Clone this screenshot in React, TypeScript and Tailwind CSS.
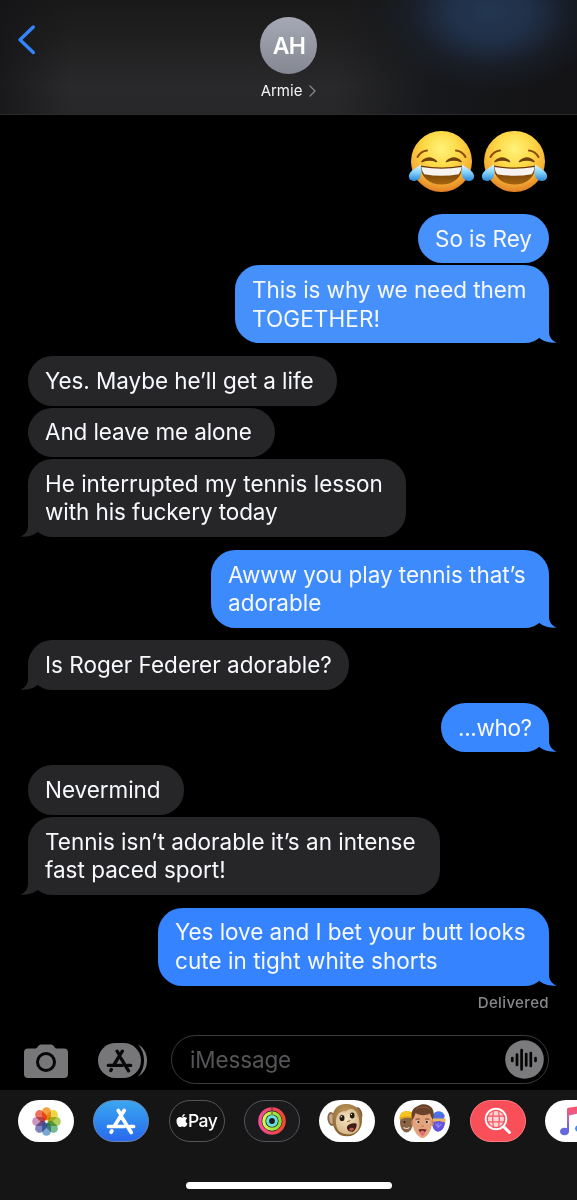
import type { ReactNode } from "react";
import { FaApple } from "react-icons/fa";

type Line = { text: string; className?: string };
type Message = {
  from: "me" | "them";
  lines: Line[];
  tail?: boolean;
  width: string;
  gap: string;
  tone?: string;
};

const messages: Message[] = [
  { from: "me", lines: [{ text: "So is Rey", className: "tracking-[-0.060px]" }], width: "w-[131px]", gap: "", tone: "bg-[#4791fc] text-[#4791fc]" },
  { from: "me", tail: true, lines: [{ text: "This is why we need them", className: "tracking-[-0.070px]" }, { text: "TOGETHER!", className: "tracking-[0.120px]" }], width: "w-[314px]", gap: "mt-[2px]", tone: "bg-[#4690fc] text-[#4690fc]" },
  { from: "them", lines: [{ text: "Yes. Maybe he’ll get a life", className: "tracking-[-0.060px]" }], width: "w-[309px]", gap: "mt-[12.7px]" },
  { from: "them", lines: [{ text: "And leave me alone", className: "tracking-[-0.120px]" }], width: "w-[247px]", gap: "mt-[2px]" },
  { from: "them", tail: true, lines: [{ text: "He interrupted my tennis lesson" }, { text: "with his fuckery today", className: "tracking-[-0.080px]" }], width: "w-[378px]", gap: "mt-[2px]" },
  { from: "me", tail: true, lines: [{ text: "Awww you play tennis that’s", className: "tracking-[-0.040px]" }, { text: "adorable" }], width: "w-[338px]", gap: "mt-[12.6px]", tone: "bg-[#3d8afd] text-[#3d8afd]" },
  { from: "them", tail: true, lines: [{ text: "Is Roger Federer adorable?" }], width: "w-[321px]", gap: "mt-[12.7px]" },
  { from: "me", tail: true, lines: [{ text: "...who?", className: "tracking-[-0.350px]" }], width: "w-[108px]", gap: "mt-[12.8px]", tone: "bg-[#3987fe] text-[#3987fe]" },
  { from: "them", lines: [{ text: "Nevermind", className: "tracking-[-0.060px]" }], width: "w-[156px]", gap: "mt-[12.9px]" },
  { from: "them", tail: true, lines: [{ text: "Tennis isn’t adorable it’s an intense" }, { text: "fast paced sport!" }], width: "w-[412px]", gap: "mt-[2px]" },
  { from: "me", tail: true, lines: [{ text: "Yes love and I bet your butt looks", className: "tracking-[-0.045px]" }, { text: "cute in tight white shorts", className: "tracking-[0.040px]" }], width: "w-[391px]", gap: "mt-[12.6px]", tone: "bg-[#3583fe] text-[#3583fe]" },
];

function Bubble({ message }: { message: Message }) {
  const mine = message.from === "me";
  const tone = message.tone ?? "bg-[#262629] text-[#262629]";
  return (
    <div
      className={`relative shrink-0 rounded-[24.5px] pt-[10.9px] pb-[10.3px] pl-[17px] ${message.width} ${message.gap} ${tone} ${mine ? "self-end" : "self-start"}`}
    >
      {message.tail && (
        <svg
          className={`absolute bottom-0 h-[24px] w-[24px] ${mine ? "-right-[8px]" : "-left-[8px] -scale-x-100"}`}
          viewBox="0 0 24 24"
          fill="currentColor"
        >
          <path d="M16 0V13C16 17.500 18.500 21.700 23.700 23.700C17 24 11.500 22.800 7 19.400L2 12Z" />
        </svg>
      )}
      {message.lines.map((line) => (
        <div key={line.text} className={`relative whitespace-nowrap text-[22.5px] leading-[28.4px] text-[#f7f9fc] ${line.className ?? ""}`}>
          <span>{line.text}</span>
        </div>
      ))}
    </div>
  );
}

function JoyFace() {
  return (
    <svg className="h-[64px] w-[68px]" viewBox="0 0 68 64" role="img" aria-label="Face with tears of joy">
      <defs>
        <radialGradient id="joyFace" cx="50%" cy="30%" r="70%">
          <stop offset="0" stopColor="#fff27a" />
          <stop offset=".4" stopColor="#fddb49" />
          <stop offset=".75" stopColor="#f8b335" />
          <stop offset="1" stopColor="#e07f26" />
        </radialGradient>
        <linearGradient id="joyTear" x1="0" y1="0" x2="0" y2="1">
          <stop offset="0" stopColor="#e3f8ff" />
          <stop offset=".5" stopColor="#7fd0fa" />
          <stop offset="1" stopColor="#2c83d6" />
        </linearGradient>
        <linearGradient id="joyMouth" x1="0" y1="0" x2="0" y2="1">
          <stop offset="0" stopColor="#633308" />
          <stop offset="1" stopColor="#a3650f" />
        </linearGradient>
      </defs>
      <circle cx="33.500" cy="31.500" r="30.500" fill="url(#joyFace)" />
      <path d="M9.500 27Q13 21 19 20.500M57.500 27Q54 21 48 20.500" fill="none" stroke="#8a4d0b" strokeWidth="2" strokeLinecap="round" />
      <path d="M14 31.500Q21 24.500 28.500 31.500Q21.500 28.500 14 31.500ZM38.500 31.500Q46 24.500 53 31.500Q46 28.500 38.500 31.500Z" fill="#70400c" stroke="#70400c" strokeWidth="1.600" strokeLinejoin="round" />
      <path d="M12.500 35.500Q33.500 39.500 54.500 35.500C54.500 47 46 54.500 33.500 54.500S12.500 47 12.500 35.500Z" fill="url(#joyMouth)" />
      <path d="M13.500 37Q33.500 40.500 53.500 37Q53.200 41 50.800 44.200Q33.500 47.200 16.200 44.200Q13.800 41 13.500 37Z" fill="#f7f4f0" />
      <path d="M12.800 34.500C14.500 43 13.500 50.300 6.700 51C1 51.500-.7 46.500 2.500 42.300C5 39 9.500 37.500 12.800 34.500Z" fill="url(#joyTear)" />
      <path d="M54.200 34.500C52.500 43 53.500 50.300 60.300 51C66 51.500 67.700 46.500 64.500 42.300C62 39 57.500 37.500 54.200 34.500Z" fill="url(#joyTear)" />
    </svg>
  );
}

function StoreGlyph({ className }: { className: string }) {
  return (
    <svg className={`shrink-0 ${className}`} viewBox="0 0 30 27" fill="none" stroke="currentColor" strokeWidth="3.700" strokeLinecap="round">
      <path d="M12.300 2.500L14 5.200M18.200 2.500L8.800 17.500M2.400 18.500H18M16 9.500L25.200 24.500M24 18.500H27.600M5.800 23L5.200 24.200" />
    </svg>
  );
}

function Pill({ className, children }: { className: string; children: ReactNode }) {
  return (
    <div className={`flex h-[42px] w-[56px] shrink-0 items-center justify-center overflow-hidden rounded-full ${className}`}>
      {children}
    </div>
  );
}

const petals = [
  ["#f39a2c", 0],
  ["#ecd136", 45],
  ["#a9c94b", 90],
  ["#68b584", 135],
  ["#6c9fce", 180],
  ["#7479b8", 225],
  ["#c78db8", 270],
  ["#ed6550", 315],
] as const;

function Photos() {
  return (
    <svg className="h-[29px] w-[29px] shrink-0" viewBox="0 0 28 28">
      {petals.map(([color, angle]) => (
        <rect
          key={angle}
          x="9.700"
          y="0.200"
          width="8.600"
          height="12.600"
          rx="4.300"
          fill={color}
          fillOpacity=".92"
          transform={`rotate(${angle} 14 14)`}
          className="mix-blend-multiply"
        />
      ))}
    </svg>
  );
}

function Rings() {
  return (
    <svg className="h-[28px] w-[28px]" viewBox="0 0 28 28" fill="none">
      <defs>
        <linearGradient id="moveRing">
          <stop offset="0" stopColor="#f54b9c" />
          <stop offset=".5" stopColor="#ee4960" />
          <stop offset="1" stopColor="#f44730" />
        </linearGradient>
        <linearGradient id="exerciseRing">
          <stop offset="0" stopColor="#d3f54b" />
          <stop offset="1" stopColor="#8bdc35" />
        </linearGradient>
      </defs>
      <circle cx="14" cy="14" r="12.100" stroke="url(#moveRing)" strokeWidth="3.400" />
      <circle cx="14" cy="14" r="8.200" stroke="url(#exerciseRing)" strokeWidth="3.200" />
      <circle cx="14" cy="14" r="4.400" stroke="#6be0dc" strokeWidth="3" />
      <path d="M14 .3V3.600M14 4.500V7" stroke="#4b1b1b" strokeWidth=".8" />
    </svg>
  );
}

function Monkey() {
  return (
    <svg className="h-[36px] w-[38px] shrink-0 -translate-x-[2px] -translate-y-px" viewBox="0 0 38 36">
      <defs>
        <radialGradient id="monkeyFur" cx="45%" cy="30%" r="75%">
          <stop offset="0" stopColor="#c39d60" />
          <stop offset="1" stopColor="#80592c" />
        </radialGradient>
        <radialGradient id="monkeyFace" cx="45%" cy="40%" r="65%">
          <stop offset="0" stopColor="#f6e2c1" />
          <stop offset="1" stopColor="#d3b283" />
        </radialGradient>
      </defs>
      <ellipse cx="5.500" cy="17" rx="4" ry="7" fill="#86694b" transform="rotate(-8 5 17)" />
      <ellipse cx="5.700" cy="17" rx="2.400" ry="5" fill="#c9a98c" transform="rotate(-8 5 17)" />
      <ellipse cx="33" cy="11" rx="3" ry="6" fill="#866039" transform="rotate(-18 33 11)" />
      <path d="M19 2C29 1.200 35.500 8 36 17C36.500 27 30 34 21.500 34.300C12 34.500 7 28 6.500 18C6 9 10 2.700 19 2Z" fill="url(#monkeyFur)" />
      <path d="M20 9.500C23 5 30 6.500 31.500 12.500C34 18 34.500 24.500 31.500 28.500C27 34 16 33.500 12 28C8.500 22 9.500 13 14 10.500C16.500 9.200 18.500 9 20 9.500Z" fill="url(#monkeyFace)" />
      <ellipse cx="16" cy="16" rx="2.500" ry="3.100" fill="#201914" />
      <ellipse cx="26.200" cy="13.500" rx="2.300" ry="2.900" fill="#201914" />
      <circle cx="15.300" cy="14.800" r=".7" fill="#fff" />
      <circle cx="25.500" cy="12.400" r=".6" fill="#fff" />
      <path d="M21.500 19.500L24 18.800" stroke="#8e6740" strokeWidth="1" strokeLinecap="round" />
      <path d="M21 25C21.500 22 28 20.500 30 21.500C31.800 22.600 29.500 28.500 27 29.500C23.500 30.500 20.500 28 21 25Z" fill="#401b18" />
      <path d="M23 27.500C24 25.500 27 25.300 28.200 27C26.500 29.500 24.200 29.500 23 27.500Z" fill="#bd5a50" />
    </svg>
  );
}

function Memoji() {
  return (
    <svg className="h-[38px] w-[52px] shrink-0" viewBox="0 0 52 38">
      <ellipse cx="10.500" cy="20.500" rx="6.500" ry="10" fill="#8a6344" />
      <path d="M3.500 17.500C3 11.500 6 9 11 9S17.500 11 18 15L10 15.500Z" fill="#f6c324" />
      <path d="M4 16.500Q9 14 16 15.500" stroke="#dba112" strokeWidth="1.500" fill="none" />
      <circle cx="8.500" cy="20" r="1" fill="#261b16" />
      <path d="M7.500 25.500Q10.500 27.500 13.500 25.500" stroke="#eadbd0" strokeWidth="1.100" fill="none" />
      <path d="M37 13C38 8.500 46 7.500 48 12.500L48.500 20C48.500 26 45 30 41.500 29.500C38 29 36 24 36 19Z" fill="#4379ea" />
      <path d="M36 16.500H49.500V20.500H36Z" fill="#f0b45d" />
      <path d="M36 20L43 19L49 20.500C48.500 26 45 30 41.500 29.500C38 29 36 25 36 20Z" fill="#6652dc" />
      <path d="M37 14H48.500" stroke="#5d64dd" strokeWidth="1.800" />
      <path d="M42 21V26M39.500 22L42.500 25L45.500 22" stroke="#9186f0" strokeWidth="1.100" fill="none" />
      <ellipse cx="17" cy="21" rx="1.800" ry="3" fill="#cd875f" />
      <ellipse cx="36" cy="21" rx="1.800" ry="3" fill="#cd875f" />
      <path d="M17 13C17.500 7 35.500 7 36 14L35.500 24C35 29 30.500 36 26.500 36C22.500 36 17.500 29 17 24Z" fill="#e3a37d" />
      <path d="M16.300 18C14 10 17 5.500 22 4C26 1 33 2 36 6C38.500 9.500 37.800 14.500 36.700 18C35.500 15 34.500 13.500 34 11.500C29 14 23.500 13.500 19.500 11C18.800 14 17.800 16 16.300 18Z" fill="#68422b" />
      <path d="M20 7Q26 3.500 33 6.500" stroke="#8c5c3b" strokeWidth="1" fill="none" />
      <path d="M20 17.200L23.500 17M29.500 17L33 17.200" stroke="#70442b" strokeWidth="1" strokeLinecap="round" />
      <ellipse cx="22.200" cy="20" rx="1.700" ry="1.500" fill="#fff" />
      <ellipse cx="31" cy="20" rx="1.700" ry="1.500" fill="#fff" />
      <circle cx="22.400" cy="20" r="1.200" fill="#412617" />
      <circle cx="30.800" cy="20" r="1.200" fill="#412617" />
      <path d="M25.200 24Q26.500 24.800 27.800 24" stroke="#b86f4c" strokeWidth="1" fill="none" />
      <path d="M22.500 27.500Q26.500 26.500 30.500 27.500Q29.500 31 26.500 31T22.500 27.500Z" fill="#67231d" />
      <path d="M24.500 29Q26.500 28.200 28.500 29V32.500Q26.500 35 24.500 32.500Z" fill="#e76d74" />
    </svg>
  );
}

function ImageSearch() {
  return (
    <svg className="h-[28px] w-[28px]" viewBox="0 0 28 28" fill="none" stroke="#fff">
      <circle cx="12" cy="12" r="10.300" strokeWidth="1.900" />
      <circle cx="12" cy="12" r="8" fill="#fff" fillOpacity=".75" stroke="none" />
      <path d="M4 9.200H20M4 14.800H20M9.300 4Q8 12 9.300 20M14.700 4Q16 12 14.700 20" stroke="#f95761" strokeWidth="1.200" />
      <path d="M20 20L25.500 25.500" strokeWidth="3" strokeLinecap="round" />
    </svg>
  );
}

function MusicNote() {
  return (
    <svg className="h-[32px] w-[30px] shrink-0" viewBox="0 0 30 32">
      <defs>
        <linearGradient id="musicNote" x1="0" y1="0" x2="0" y2="1">
          <stop offset="0" stopColor="#fb5367" />
          <stop offset=".3" stopColor="#ef5b81" />
          <stop offset=".55" stopColor="#ad66dc" />
          <stop offset="1" stopColor="#5563ec" />
        </linearGradient>
      </defs>
      <path d="M9 4.500Q9 3 10.500 2.700L28 0V22H25.500V7.500L11 10.500V26H9Z" fill="url(#musicNote)" />
      <ellipse cx="6.500" cy="26.500" rx="4.500" ry="3.800" fill="#6568dc" />
      <ellipse cx="22" cy="23.500" rx="5" ry="3.800" fill="#3c8fe9" />
    </svg>
  );
}

function Header() {
  return (
    <header className="flex h-[115px] shrink-0 border-b border-[#2b2b2d] bg-[radial-gradient(ellipse_115px_80px_at_490px_12px,#233751_0%,#203048_35%,rgba(27,35,50,0.5)_70%,rgba(22,25,32,0)_100%),linear-gradient(90deg,rgba(20,20,22,0.75)_0%,rgba(20,20,22,0)_12%,rgba(20,20,22,0)_58%,#17181b_75%,#131315_100%),linear-gradient(180deg,#19191a_0%,#1f1f20_32%,#29292b_75%,#272729_100%)]">
      <div className="w-[192px] pt-[24px] pl-[17px]">
        <svg className="h-[31px] w-[20px]" viewBox="0 0 20 31" fill="none" stroke="#3484fc" strokeWidth="3.400" strokeLinecap="round" strokeLinejoin="round">
          <path d="M16.300 3L3 15.800L16.300 28.500" />
        </svg>
      </div>
      <div className="flex w-[193px] flex-col items-center pt-[17px]">
        <div className="flex h-[57px] w-[57px] items-center justify-center rounded-full bg-linear-to-b from-[#a5a9b5] to-[#858892] pt-[2px] pl-px text-[23px] font-semibold tracking-[-0.600px] text-white">
          <span>AH</span>
        </div>
        <div className="mt-[7px] flex h-[20px] items-center gap-[7px] text-[15px] leading-[20px] text-[#f3f3f4]">
          <span>Armie</span>
          <svg className="h-[12px] w-[7px]" viewBox="0 0 7 12" fill="none" stroke="#87878a" strokeWidth="1.300" strokeLinecap="round" strokeLinejoin="round">
            <path d="M1 1L6 6L1 11" />
          </svg>
        </div>
      </div>
    </header>
  );
}

function Composer() {
  return (
    <div className="flex h-[54px] shrink-0 items-start pl-[24px]">
      <svg className="mt-[8px] h-[35px] w-[44px]" viewBox="0 0 44 35">
        <path d="M4 4.500H11.500C13.500 4.500 14 .5 17 .5H27C30 .5 30.500 4.500 32.500 4.500H40Q44 4.500 44 8.500V30Q44 34 40 34H4Q0 34 0 30V8.500Q0 4.500 4 4.500Z" fill="#777779" />
        <circle cx="22" cy="18" r="8.500" fill="none" stroke="#050505" strokeWidth="3" />
      </svg>
      <div className="mt-[7px] ml-[30px] flex h-[35px] w-[49px] items-center">
        <div className="flex h-[35px] w-[43px] shrink-0 items-center justify-center rounded-full bg-[#777779] text-[#080808]">
          <StoreGlyph className="h-[24px] w-[27px]" />
        </div>
        <svg className="-ml-[6px] h-[35px] w-[12px] shrink-0" viewBox="0 0 12 35" fill="#777779">
          <path d="M3 1.500C9.500 5 12 11 12 17.500S9.500 30 3 33.500C7 29 9 24 9 17.500S7 6 3 1.500Z" />
        </svg>
      </div>
      <div className="-mt-px ml-[24px] flex h-[49px] w-[378px] items-center rounded-full border-[1.500px] border-[#3c3c3e] pr-[4px] pl-[18px]">
        <span className="flex-1 pt-px text-[22.500px] tracking-[-0.150px] text-[#555558]">iMessage</span>
        <svg className="h-[39px] w-[39px]" viewBox="0 0 39 39">
          <circle cx="19.500" cy="19.500" r="19.300" fill="#7b7b7d" />
          <path d="M7.300 18V21M12 14.500V25M16.600 10V29.500M21.200 14V25.500M25.800 13V26M30.500 18V21" stroke="#050505" strokeWidth="2.700" strokeLinecap="round" />
        </svg>
      </div>
    </div>
  );
}

function AppStrip() {
  return (
    <footer className="flex h-[110px] shrink-0 flex-col items-center bg-[#151515] pt-[10px]">
      <div className="flex w-full gap-[19.300px] overflow-hidden pl-[18px]">
        <Pill className="bg-white"><Photos /></Pill>
        <Pill className="border border-[#6786b5] bg-linear-to-b from-[#3ca6ef] to-[#2b68ee] text-white">
          <StoreGlyph className="h-[27px] w-[30px]" />
        </Pill>
        <Pill className="border border-[#555557] bg-[#141414] text-white">
          <FaApple className="h-[15px] w-[12px] -translate-y-px" />
          <span className="text-[17.500px] leading-none font-medium tracking-[-0.600px]">Pay</span>
        </Pill>
        <Pill className="border border-[#555557] bg-[#1b1b1e]"><Rings /></Pill>
        <Pill className="bg-white"><Monkey /></Pill>
        <Pill className="bg-white"><Memoji /></Pill>
        <Pill className="border border-[#ff7a7f] bg-[#f94f58]"><ImageSearch /></Pill>
        <Pill className="bg-white"><MusicNote /></Pill>
      </div>
      <div className="mt-[40px] h-[7px] w-[206px] shrink-0 rounded-full bg-white" />
    </footer>
  );
}

export default function App() {
  return (
    <div className="flex h-[1200px] w-[577px] flex-col overflow-hidden bg-black font-['Inter',sans-serif]">
      <Header />
      <main className="flex h-[921px] shrink-0 flex-col px-[28px] pt-[15px]">
        <div className="mb-[19.700px] flex h-[64px] shrink-0 gap-[5px] self-end">
          <JoyFace />
          <JoyFace />
        </div>
        {messages.map((message) => (
          <Bubble key={message.lines[0].text} message={message} />
        ))}
        <div className="mt-[7px] self-end text-[15px] leading-[20px] font-medium tracking-[0.370px] text-[#88888c]">Delivered</div>
      </main>
      <Composer />
      <AppStrip />
    </div>
  );
}
